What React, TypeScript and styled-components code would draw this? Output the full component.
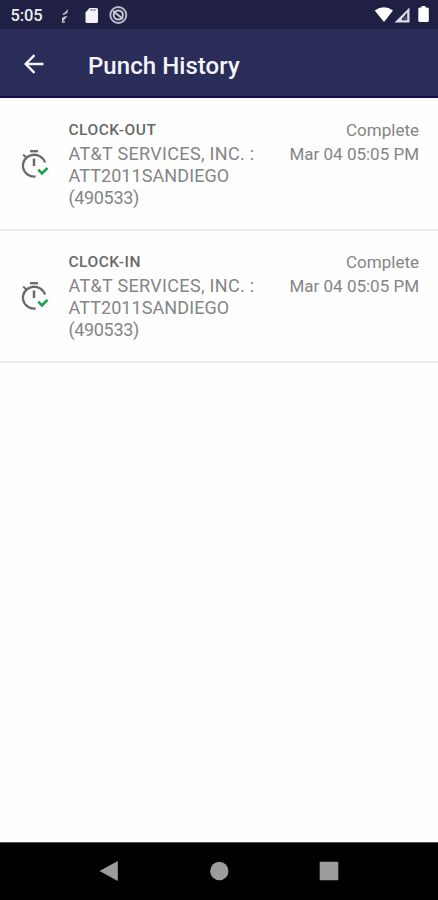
import React from "react";
import styled, { createGlobalStyle } from "styled-components";

const GlobalStyle = createGlobalStyle`
  * { box-sizing: border-box; }
  html, body { margin: 0; padding: 0; }
  body { background: #fff; font-family: Roboto, "Liberation Sans", sans-serif; overflow: hidden; }
`;

const Screen = styled.div`
  width: 438px;
  height: 900px;
  display: flex;
  flex-direction: column;
  background: #fefefe;
`;

const StatusBar = styled.div`
  height: 29px;
  flex: none;
  display: flex;
  align-items: center;
  padding: 3px 8px 0 10.5px;
  background: #1f2043;
  color: #ececf2;
`;

const StatusTime = styled.span`
  width: 48.5px;
  font-size: 16.5px;
  line-height: 20px;
  font-weight: 500;
  letter-spacing: -0.1px;
  white-space: nowrap;
`;

const StatusIcons = styled.div`
  display: flex;
  align-items: center;
  svg { display: block; }
`;

const Notifications = styled(StatusIcons)`
  flex: 1;
`;

const AppBar = styled.header`
  height: 69px;
  flex: none;
  display: flex;
  align-items: center;
  padding: 3px 0 0 23px;
  background: #2a2d57;
  border-bottom: 2px solid #17094f;
  color: #f4f4fb;
`;

const BackButton = styled.button`
  width: 65px;
  height: 24px;
  padding: 0;
  border: 0;
  background: none;
  color: inherit;
  svg { display: block; }
`;

const Title = styled.h1`
  margin: 0;
  padding-top: 3px;
  font-size: 24px;
  line-height: 30px;
  font-weight: 500;
  letter-spacing: 0.05px;
  white-space: nowrap;
`;

const List = styled.ul`
  flex: 1;
  margin: 0;
  padding: 1px 0 0;
  list-style: none;
`;

const PunchRow = styled.li`
  height: 132px;
  display: flex;
  padding: 21px 19px 0 19px;
  border-bottom: 2px solid #e9e9e9;
  color: #858585;
`;

const PunchIcon = styled.div`
  width: 49.5px;
  flex: none;
  padding-top: 28.5px;
  svg { display: block; }
`;

const PunchDetails = styled.div`
  width: 200px;
  flex: none;
`;

const PunchKind = styled.div`
  font-size: 15.5px;
  line-height: 21px;
  font-weight: 500;
  letter-spacing: 0.5px;
  color: #686868;
`;

const PunchLine = styled.div<{ $tracking: number }>`
  font-size: 18px;
  line-height: 22px;
  letter-spacing: ${(p) => p.$tracking}px;
  white-space: nowrap;
`;

const PunchJob = styled.div`
  padding-top: 2px;
`;

const PunchMeta = styled.div`
  flex: 1;
  text-align: right;
  font-size: 17px;
  white-space: nowrap;
`;

const MetaLine = styled.div`
  line-height: 24px;
  margin-top: -2px;
  & + & { margin-top: 0; }
`;

const NavBar = styled.nav`
  height: 58px;
  flex: none;
  display: flex;
  justify-content: space-between;
  align-items: center;
  padding: 0 99px 1px;
  background: #000;
  border-top: 1px solid #555;
`;

const NavButton = styled.button`
  width: 20px;
  height: 20px;
  padding: 0;
  border: 0;
  background: none;
  svg { display: block; }
`;

const StopwatchIcon = () => (
  <svg width="30" height="32" viewBox="0 0 30 32" fill="none" stroke="#6b6b6b" strokeWidth="2.3">
    <path d="M11 2.2h8" />
    <path d="M15 9.500v7.500" strokeWidth="2.500" />
    <path d="M4.200 5.500l3.400 3.400" strokeWidth="2" />
    <path d="M26 13.500A11.300 10.900 0 1 0 16.600 27.500" />
    <path d="M19.300 20.700l3.600 3.700 5.600-5.400" stroke="#18a449" strokeWidth="2.600" />
  </svg>
);

const punches = [
  { kind: "CLOCK-OUT", status: "Complete", time: "Mar 04 05:05 PM" },
  { kind: "CLOCK-IN", status: "Complete", time: "Mar 04 05:05 PM" },
];

const jobLines = [
  { text: "AT&T SERVICES, INC. :", tracking: 0.32 },
  { text: "ATT2011SANDIEGO", tracking: 0.08 },
  { text: "(490533)", tracking: -0.35 },
];

export default function App() {
  return (
    <Screen>
      <GlobalStyle />
      <StatusBar>
        <StatusTime>5:05</StatusTime>
        <Notifications>
          <svg width="70" height="22" viewBox="0 0 70 22">
            <path d="M3.800 9.500L9 4l-.5 3.800L6 9.500z" fill="#b9b9ca" />
            <path d="M8.500 11L3 17.500V13l2.500-1.500z" fill="#cacad6" />
            <path d="M4 9.500l1.500-1.200M3 17.500l3-.8" stroke="#b9b9ca" strokeWidth="1.300" />
            <path d="M30.500 3h7Q39 3 39 4.500v12q0 1.500-1.500 1.500H28q-1.500 0-1.500-1.500v-9z" fill="#f3f3f7" />
            <path d="M31 5h6" stroke="#9d9db3" strokeWidth="1.600" />
            <circle cx="59.300" cy="10" r="8" fill="none" stroke="#bcbccb" strokeWidth="1.900" />
            <circle cx="59.300" cy="10" r="4.600" fill="none" stroke="#c8c8d4" strokeWidth="2" />
            <path d="M54 6l10 8" stroke="#c8c8d4" strokeWidth="2" />
          </svg>
        </Notifications>
        <StatusIcons>
          <svg width="56" height="20" viewBox="0 0 56 20">
            <path d="M.7 4.500Q10 -2 19 4.500L10 16z" fill="#fff" />
            <path fillRule="evenodd" d="M35.500 1.500v15H20.500zM33.200 6.500l-5.500 6.500v1.200h5.500z" fill="#dedee8" />
            <path d="M29.500 12.500l3-3.500v4.800h-3z" fill="#555673" />
            <path d="M47.500 -.5h4v2h1.800q1.500 0 1.500 1.500v11.500q0 1.500-1.500 1.500h-7.500q-1.500 0-1.500-1.500V3q0-1.500 1.500-1.500h1.700z" fill="#fff" />
          </svg>
        </StatusIcons>
      </StatusBar>
      <AppBar>
        <BackButton aria-label="Back">
          <svg width="22" height="22" viewBox="0 0 22 22" fill="none" stroke="currentColor" strokeWidth="2.400">
            <path d="M20.500 11H3M11.500 2.200L2.700 11l8.800 8.800" />
          </svg>
        </BackButton>
        <Title>Punch History</Title>
      </AppBar>
      <List>
        {punches.map((punch) => (
          <PunchRow key={punch.kind}>
            <PunchIcon><StopwatchIcon /></PunchIcon>
            <PunchDetails>
              <PunchKind>{punch.kind}</PunchKind>
              <PunchJob>
                {jobLines.map((line) => (
                  <PunchLine key={line.text} $tracking={line.tracking}>{line.text}</PunchLine>
                ))}
              </PunchJob>
            </PunchDetails>
            <PunchMeta>
              <MetaLine>{punch.status}</MetaLine>
              <MetaLine>{punch.time}</MetaLine>
            </PunchMeta>
          </PunchRow>
        ))}
      </List>
      <NavBar>
        <NavButton aria-label="Back">
          <svg width="20" height="20" viewBox="0 0 20 20"><path d="M18.800 0v20L.5 10z" fill="#9c9c9c" /></svg>
        </NavButton>
        <NavButton aria-label="Home">
          <svg width="20" height="20" viewBox="0 0 20 20"><circle cx="10.300" cy="10" r="9.200" fill="#9c9c9c" /></svg>
        </NavButton>
        <NavButton aria-label="Recent apps">
          <svg width="20" height="20" viewBox="0 0 20 20"><rect x=".7" y=".7" width="18.600" height="18.600" rx=".8" fill="#9c9c9c" /></svg>
        </NavButton>
      </NavBar>
    </Screen>
  );
}
